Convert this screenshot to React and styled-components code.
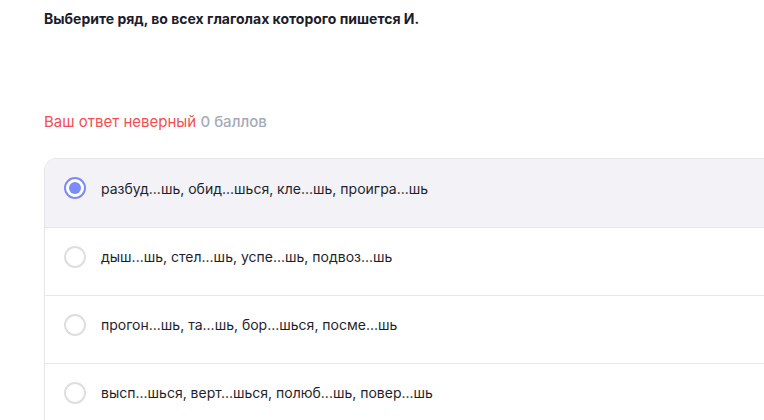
import React from 'react';
import styled, { createGlobalStyle } from 'styled-components';

const GlobalStyle = createGlobalStyle`
  body {
    margin: 0;
    background: #ffffff;
    font-family: 'Inter', 'Noto Sans', sans-serif;
    overflow: hidden;
  }
`;

const Page = styled.div`
  width: 764px;
  height: 420px;
  overflow: hidden;
  padding: 10px 0 0 44px;
  box-sizing: border-box;
`;

const Question = styled.h2`
  margin: 0;
  font-size: 14px;
  line-height: 17px;
  font-weight: 700;
  color: #1c1c2b;
`;

const Result = styled.div`
  margin-top: 86px;
  font-size: 15px;
  line-height: 18px;
  color: #f44e52;
`;

const Score = styled.span`
  color: #a5abb8;
  font-weight: 500;
`;

const Options = styled.div`
  margin-top: 27px;
  width: 760px;
  border: 1px solid #e4e4ea;
  border-radius: 12px;
  overflow: hidden;
`;

const Option = styled.label`
  display: flex;
  align-items: center;
  gap: 15px;
  height: 68px;
  box-sizing: border-box;
  padding: 0 0 10px 19px;
  background: ${p => (p.$checked ? '#f3f3f7' : '#ffffff')};
  border-top: ${p => (p.$first ? 'none' : '1px solid #e6e6ec')};
  font-size: 14px;
  color: #1f1f2e;
`;

const Radio = styled.span`
  flex: none;
  width: 22px;
  height: 22px;
  box-sizing: border-box;
  border-radius: 50%;
  border: 2px solid ${p => (p.$checked ? '#7b8cf6' : '#dedede')};
  display: flex;
  align-items: center;
  justify-content: center;
  background: #ffffff;
  &::after {
    content: '';
    display: ${p => (p.$checked ? 'block' : 'none')};
    width: 12px;
    height: 12px;
    border-radius: 50%;
    background: #7b8cf6;
  }
`;

const answers = [
  'разбуд...шь, обид...шься, кле...шь, проигра...шь',
  'дыш...шь, стел...шь, успе...шь, подвоз...шь',
  'прогон...шь, та...шь, бор...шься, посме...шь',
  'высп...шься, верт...шься, полюб...шь, повер...шь',
];

const App = () => (
  <Page>
    <GlobalStyle />
    <Question>Выберите ряд, во всех глаголах которого пишется И.</Question>
    <Result>
      Ваш ответ неверный <Score>0 баллов</Score>
    </Result>
    <Options>
      {answers.map((text, i) => (
        <Option key={i} $checked={i === 0} $first={i === 0}>
          <Radio $checked={i === 0} />
          {text}
        </Option>
      ))}
    </Options>
  </Page>
);

export default App;
